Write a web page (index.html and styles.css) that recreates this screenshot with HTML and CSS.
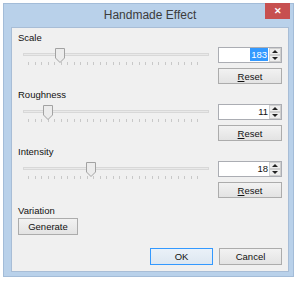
FILE: index.html
```html
<!doctype html>
<html lang="en">
  <head>
    <meta charset="utf-8">
    <title>Handmade Effect</title>
    <link rel="stylesheet" href="styles.css">
  </head>
  <body>
    <div class="window">
      <div class="titlebar">
        <span class="title">Handmade Effect</span>
        <span class="close">&#x2715;</span>
      </div>
      <div class="client">
        <div class="param">
          <div class="label">Scale</div>
          <div class="row">
            <div class="slider">
              <div class="track"></div>
              <svg class="thumb" style="left: 32px" width="10" height="15" viewBox="0 0 10 15"><path d="M0.5 0.5 H9.5 V10 L5 14.5 L0.5 10 Z" fill="#ececec" stroke="#a2a2a2"/></svg>
              <div class="ticks"></div>
            </div>
            <div class="controls">
              <div class="numbox"><span class="value"><span class="sel">183</span></span><span class="spin"><span class="up"></span><span class="down"></span></span></div>
              <button class="btn"><u>R</u>eset</button>
            </div>
          </div>
        </div>
        <div class="param">
          <div class="label">Roughness</div>
          <div class="row">
            <div class="slider">
              <div class="track"></div>
              <svg class="thumb" style="left: 20px" width="10" height="15" viewBox="0 0 10 15"><path d="M0.5 0.5 H9.5 V10 L5 14.5 L0.5 10 Z" fill="#ececec" stroke="#a2a2a2"/></svg>
              <div class="ticks"></div>
            </div>
            <div class="controls">
              <div class="numbox"><span class="value">11</span><span class="spin"><span class="up"></span><span class="down"></span></span></div>
              <button class="btn"><u>R</u>eset</button>
            </div>
          </div>
        </div>
        <div class="param">
          <div class="label">Intensity</div>
          <div class="row">
            <div class="slider">
              <div class="track"></div>
              <svg class="thumb" style="left: 63px" width="10" height="15" viewBox="0 0 10 15"><path d="M0.5 0.5 H9.5 V10 L5 14.5 L0.5 10 Z" fill="#ececec" stroke="#a2a2a2"/></svg>
              <div class="ticks"></div>
            </div>
            <div class="controls">
              <div class="numbox"><span class="value">18</span><span class="spin"><span class="up"></span><span class="down"></span></span></div>
              <button class="btn"><u>R</u>eset</button>
            </div>
          </div>
        </div>
        <div class="variation">
          <div class="label">Variation</div>
          <button class="btn generate">Generate</button>
        </div>
        <div class="footer">
          <button class="btn dialog default">OK</button>
          <button class="btn dialog">Cancel</button>
        </div>
      </div>
    </div>
  </body>
</html>
```

FILE: styles.css
```css
body { margin: 0; background: #fff; font-family: "Liberation Sans", Arial, sans-serif; }
div, span, button { box-sizing: border-box; }

/* window frame */
.window { margin: 3px 0 0 3px; width: 291px; height: 274px; background: #b9d1ea; border: 1px solid #a3bcd8; padding: 0 4px 4px 7px; display: flex; flex-direction: column; }
.titlebar { height: 23px; position: relative; display: flex; align-items: center; justify-content: center; }
.title { font-size: 12px; color: #3c3c3c; margin-top: -1px; }
.close { position: absolute; right: -1px; top: -1px; width: 25px; height: 16px; background: #c75050; color: #fff; font-size: 9px; font-weight: bold; display: flex; align-items: center; justify-content: center; }

/* client area */
.client { flex: 1; background: #f0f0f0; border: 1px solid #a8bdd6; padding: 4px 6px 6px 6px; display: flex; flex-direction: column; font-size: 9.5px; color: #111; }
.label { height: 15px; line-height: 12px; }
.param { height: 57px; }
.row { display: flex; gap: 9px; }

.slider { flex: 1; margin-left: 5px; position: relative; height: 20px; }
.track { margin-top: 6px; height: 3px; background: #e9e9e9; border: 1px solid #d8d8d8; }
.thumb { position: absolute; top: 1px; display: block; }
.ticks { margin: 6px 5px 0 5px; height: 3px; background: repeating-linear-gradient(to right, #c8c8c8 0 1px, transparent 1px 6.5px); }

.controls { width: 64px; display: flex; flex-direction: column; gap: 5px; }
.numbox { height: 16px; display: flex; background: #fff; border: 1px solid #abadb3; }
.value { flex: 1; text-align: right; line-height: 14px; padding-right: 1px; }
.sel { background: #3399ff; color: #fff; padding: 1px 1px; }
.spin { width: 12px; display: flex; flex-direction: column; }
.spin span { flex: 1; background: #eeeeee; border: 1px solid #cfcfcf; position: relative; }
.spin .up::after, .spin .down::after { content: ""; position: absolute; left: 2px; top: 1px; border-left: 3px solid transparent; border-right: 3px solid transparent; }
.spin .up::after { border-bottom: 3px solid #222; }
.spin .down::after { border-top: 3px solid #222; }

.btn { height: 16px; padding: 0; font-family: inherit; font-size: 9.5px; color: #111; background: linear-gradient(#f2f2f2, #e3e3e3); border: 1px solid #acacac; }
.variation { margin-top: 2px; }
.variation .label { height: 13px; }
.generate { width: 60px; height: 17px; }
.footer { margin-top: auto; display: flex; justify-content: flex-end; gap: 6px; }
.dialog { width: 63px; height: 17px; }
.default { border-color: #3399ff; background: linear-gradient(#eaf1f8, #dde7f1); }
```
